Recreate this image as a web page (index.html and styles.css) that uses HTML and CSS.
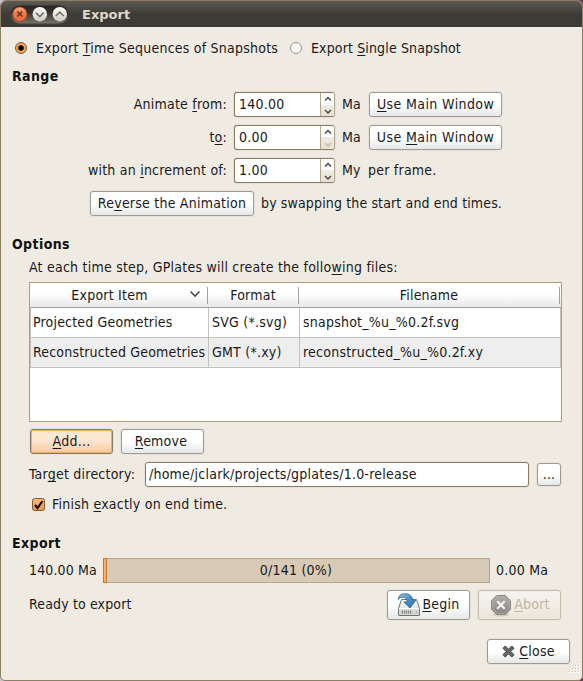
FILE: index.html
```html
<!DOCTYPE html>
<html lang="en">
<head>
<meta charset="utf-8">
<title>Export</title>
<link rel="stylesheet" href="styles.css">
</head>
<body>
<div class="window">
  <header class="titlebar">
    <div class="controls">
      <svg width="59" height="19" viewBox="0 0 59 19">
        <defs>
          <linearGradient id="red" x1="0" y1="0" x2="0" y2="1"><stop offset="0" stop-color="#f9a583"/><stop offset=".5" stop-color="#ef7546"/><stop offset="1" stop-color="#e9683a"/></linearGradient>
          <linearGradient id="gray" x1="0" y1="0" x2="0" y2="1"><stop offset="0" stop-color="#fffefa"/><stop offset="1" stop-color="#cfccc2"/></linearGradient>
          <linearGradient id="pill" x1="0" y1="0" x2="0" y2="1"><stop offset="0" stop-color="#282723"/><stop offset=".4" stop-color="#34332e"/><stop offset="1" stop-color="#77756b"/></linearGradient>
        </defs>
        <rect x=".5" y=".5" width="58" height="18" rx="9" fill="url(#pill)"/>
        <circle cx="9.8" cy="9.2" r="7.2" fill="url(#red)" stroke="#8c3920" stroke-width=".5"/>
        <circle cx="29.8" cy="9.2" r="7.2" fill="url(#gray)"/>
        <circle cx="49.8" cy="9.2" r="7.2" fill="url(#gray)"/>
        <path d="M7.300 6.500l5 5M12.300 6.500l-5 5" stroke="#65392a" stroke-width="1.700" fill="none"/>
        <path d="M25.800 7.700l4 3.800 4-3.800M45.800 11l4-3.800 4 3.800" stroke="#77756d" stroke-width="1.700" fill="none"/>
      </svg>
    </div>
    <h1>Export</h1>
  </header>

  <main class="content">
    <div class="modes">
      <span class="radio on"></span><span class="first">Export <u>T</u>ime Sequences of Snapshots</span>
      <span class="radio"></span><span class="tight">Export <u>S</u>ingle Snapshot</span>
    </div>

    <h2 class="range-title">Range</h2>
    <div class="range">
      <span class="label">Animate <u>f</u>rom:</span>
      <div class="spin"><span class="value">140.00</span><svg class="arrows" width="14" height="24"><path d="M4 7.500l3-3 3 3M4 17l3 3 3-3"/></svg></div>
      <span class="unit">Ma</span>
      <button class="button wide"><span><u>U</u>se Main Window</span></button>

      <span class="label">t<u>o</u>:</span>
      <div class="spin"><span class="value">0.00</span><svg class="arrows" width="14" height="24"><path d="M4 7.500l3-3 3 3"/><path class="off" d="M4 17l3 3 3-3"/></svg></div>
      <span class="unit">Ma</span>
      <button class="button wide"><span>Use <u>M</u>ain Window</span></button>

      <span class="label">with an <u>i</u>ncrement of:</span>
      <div class="spin"><span class="value">1.00</span><svg class="arrows" width="14" height="24"><path d="M4 7.500l3-3 3 3M4 17l3 3 3-3"/></svg></div>
      <span class="unit">My</span>
      <span class="unit frame">per frame.</span>
    </div>
    <div class="reverse">
      <button class="button"><span>Re<u>v</u>erse the Animation</span></button>
      <span class="unit tight">by swapping the start and end times.</span>
    </div>

    <h2 class="options-title">Options</h2>
    <p class="hint">At each time step, GPlates will create the follo<u>w</u>ing files:</p>
    <div class="table">
      <div class="thead">
        <span class="th sorted">Export Item<svg width="12" height="8"><path d="M1.500 1.500l4.500 4.500 4.500-4.500" fill="none" stroke="#4b4b4b" stroke-width="1.600"/></svg></span>
        <span class="th">Format</span>
        <span class="th">Filename</span>
      </div>
      <div class="tr"><span>Projected Geometries</span><span>SVG (*.svg)</span><span>snapshot_%u_%0.2f.svg</span></div>
      <div class="tr alt"><span>Reconstructed Geometries</span><span>GMT (*.xy)</span><span>reconstructed_%u_%0.2f.xy</span></div>
    </div>
    <div class="actions">
      <button class="button hot"><span><u>A</u>dd...</span></button>
      <button class="button remove"><span><u>R</u>emove</span></button>
    </div>
    <div class="target">
      <span class="target-label">Tar<u>g</u>et directory:</span>
      <div class="field">/home/jclark/projects/gplates/1.0-release</div>
      <button class="button browse"><span>...</span></button>
    </div>
    <div class="finish">
      <svg class="check" width="13" height="13" viewBox="0 0 13 13"><defs><linearGradient id="box" x1="0" y1="0" x2="0" y2="1"><stop offset="0" stop-color="#fbb972"/><stop offset="1" stop-color="#ee9440"/></linearGradient></defs><rect x=".5" y=".5" width="12" height="12" rx="2" fill="url(#box)" stroke="#825a38"/><path d="M3 7l2.500 3L10.500 3" fill="none" stroke="#000" stroke-width="2"/></svg>
      <span>Finish <u>e</u>xactly on end time.</span>
    </div>

    <h2 class="export-title">Export</h2>
    <div class="progress">
      <span class="from">140.00 Ma</span>
      <div class="bar"><span class="chunk"></span><span class="percent">0/141 (0%)</span></div>
      <span class="unit">0.00 Ma</span>
    </div>
    <div class="run">
      <span class="status">Ready to export</span>
      <button class="button tall">
        <svg width="24" height="24" viewBox="0 0 24 24">
          <defs>
            <linearGradient id="drive" x1="0" y1="0" x2="0" y2="1"><stop offset="0" stop-color="#fff"/><stop offset="1" stop-color="#cfd0cd"/></linearGradient>
            <linearGradient id="arrow" x1="0" y1="0" x2="1" y2="1"><stop offset="0" stop-color="#a9cbe3"/><stop offset=".5" stop-color="#4c8fc4"/><stop offset="1" stop-color="#3473aa"/></linearGradient>
          </defs>
          <path d="M4.500 6.500h15l3 9v6.500q0 .5-.5.500H2q-.5 0-.5-.5v-6.500z" fill="url(#drive)" stroke="#737571"/>
          <path d="M2 15.500h20" stroke="#fff"/>
          <path d="M4 17.500h12v3H4z" fill="#c3c4c1"/>
          <path d="M5.500 17.500v3M7.500 17.500v3M9.500 17.500v3M11.500 17.500v3M13.500 17.500v3M18.500 19h2" stroke="#888a85"/>
          <path d="M1.500 6.500C1.500 2.500 4 .8 7.500 .8c5 0 8 2.200 8 6.500h3.200L13 15 6.800 9h3.400C10.200 5.500 8.500 4.200 6 4.200 3.800 4.200 2.500 5 1.500 6.500z" fill="url(#arrow)" stroke="#245d8c" stroke-width=".8"/>
        </svg>
        <span><u>B</u>egin</span>
      </button>
      <button class="button tall disabled" disabled>
        <svg width="24" height="24" viewBox="0 0 24 24">
          <defs><linearGradient id="stop" x1="0" y1="0" x2="0" y2="1"><stop offset="0" stop-color="#b1b0ad"/><stop offset="1" stop-color="#858480"/></linearGradient></defs>
          <ellipse cx="12" cy="21.500" rx="8" ry="2" fill="#d0ccc2"/>
          <path d="M7.800 2.500h8.400l5.300 5.300v8.400l-5.300 5.300H7.800L2.500 16.200V7.800z" fill="url(#stop)" stroke="#85837e"/>
          <path d="M8.300 3.600h7.400l4.700 4.700v7.400l-4.700 4.700H8.300l-4.700-4.700V8.300z" fill="none" stroke="#b5b4b0" stroke-width=".8"/>
          <path d="M8.300 8.300l7.400 7.400M15.700 8.300l-7.400 7.400" stroke="#f5f4f0" stroke-width="2.200"/>
        </svg>
        <span><u>A</u>bort</span>
      </button>
    </div>
    <div class="footer">
      <button class="button close">
        <svg width="13" height="13" viewBox="0 0 14 14"><path d="M3.500 1L7 4.500 10.500 1 13 3.500 9.500 7l3.500 3.500-2.500 2.500L7 9.500 3.500 13 1 10.500 4.500 7 1 3.500z" fill="#666764" stroke="#40413f"/></svg>
        <span><u>C</u>lose</span>
      </button>
    </div>
  </main>
  <svg class="grip" width="12" height="12" viewBox="0 0 12 12"><path d="M9 1h2M6 4h2M9 4h2M3 7h2M6 7h2M9 7h2M0 10h2M3 10h2M6 10h2M9 10h2" stroke="#fff" stroke-width="2"/><path d="M9 .5h1M6 3.500h1M9 3.500h1M3 6.500h1M6 6.500h1M9 6.500h1M0 9.500h1M3 9.500h1M6 9.500h1M9 9.500h1" stroke="#c3baa9"/></svg>
</div>
</body>
</html>
```

FILE: styles.css
```css
* { box-sizing: border-box; }
html { background: #6d3656; }
body {
  margin: 0;
  background: linear-gradient(90deg, #c8c2c4 50%, #6d3656 50%);
  font: 14px/18px "DejaVu Sans Condensed", "DejaVu Sans", sans-serif;
  font-stretch: condensed;
  letter-spacing: .23px;
  color: #1a1a1a;
}
u { text-decoration: underline 1px; text-underline-offset: 2px; text-decoration-skip-ink: none; }
span { white-space: nowrap; }
.window {
  position: relative;
  width: 583px;
  height: 681px;
  border: 1px solid #8d7e66;
  border-radius: 6px 6px 5px 5px;
  background: #efebe3;
  overflow: hidden;
}
.titlebar {
  display: flex;
  align-items: center;
  height: 26px;
  padding-left: 9px;
  background: linear-gradient(#5c5a51, #3d3c37 50%, #3b3a35);
}
.controls { display: flex; height: 19px; }
h1 {
  margin: 1px 0 0 13px;
  font: bold 13px/18px "DejaVu Sans", sans-serif;
  letter-spacing: 0;
  color: #dfd8c8;
}
h2 { margin: 0; font-size: 14px; line-height: 18px; letter-spacing: .4px; color: #111; }
.content { padding: 0 11px; }
.modes { display: flex; align-items: center; height: 18px; margin: 12px 0 0 3px; }
.radio {
  width: 12px;
  height: 12px;
  margin-right: 9px;
  border: 1px solid #989184;
  border-radius: 50%;
  background: #fff;
}
.radio.on { border-color: #735b40; background: radial-gradient(circle, #000 0 2.300px, #f5a44f 3.200px); }
.first { width: 254px; }
.tight { letter-spacing: .14px; }
.range-title { margin-top: 10px; }
.range {
  display: grid;
  grid-template-columns: 215px 101px 20px 133px;
  grid-auto-rows: 25px;
  column-gap: 7px;
  row-gap: 8px;
  align-items: center;
  margin-top: 7px;
}
.label { text-align: right; padding-bottom: 1px; }
.unit { padding-bottom: 1px; }
.frame { margin-left: -1px; }
.button {
  display: flex;
  align-items: center;
  justify-content: center;
  height: 25px;
  padding: 0 0 1px;
  border: 1px solid #9b9b9b;
  border-radius: 3px;
  background: linear-gradient(#fff 50%, #e7e7e7);
  box-shadow: 0 0 0 1px #e7e2d8;
  font: inherit;
  letter-spacing: inherit;
  color: inherit;
}
.wide { letter-spacing: .4px; }
.spin {
  display: flex;
  height: 25px;
  border: 1px solid #8c7b60;
  border-right-color: #b3a68f;
  border-radius: 3px;
  background: #fff;
  box-shadow: 0 0 0 1px #e7e2d8;
}
.value { flex: 1; padding-left: 4px; line-height: 23px; }
.arrows {
  height: 23px;
  border-left: 1px solid #b3a68f;
  background: linear-gradient(#fff 0 50%, #f0ece4 50%, #e6e0d5);
  border-radius: 0 2px 2px 0;
}
.arrows path { fill: none; stroke: #50483c; stroke-width: 1.500; }
.arrows .off { stroke: #c9bda8; }
.reverse { display: flex; align-items: center; gap: 7px; margin: 8px 0 0 78px; }
.reverse .button { width: 164px; }
.options-title { margin-top: 19px; }
.hint { margin: 5px 0 0 17px; }
.table {
  width: 533px;
  height: 140px;
  margin: 6px 0 0 17px;
  border: 1px solid #b09d7d;
  background: #fff;
}
.thead, .tr { display: grid; grid-template-columns: 178px 91px 261px; }
.thead {
  height: 25px;
  border-bottom: 1px solid #a0a0a0;
  background: linear-gradient(#fff 45%, #e8e8e8);
}
.th {
  position: relative;
  height: 17px;
  margin-top: 4px;
  border-right: 1px solid #a0a0a0;
  text-align: center;
  line-height: 16px;
}
.th.sorted { padding-right: 18px; }
.th svg { position: absolute; right: 6px; top: 3px; }
.tr { height: 30px; border-left: 1px solid #c5c2bb; border-bottom: 1px solid #c5c2bb; }
.tr { grid-template-columns: 178px 91px 1fr; }
.tr span { padding-left: 3px; border-right: 1px solid #c5c2bb; line-height: 29px; }
.tr span:first-child { padding-left: 2px; letter-spacing: .18px; }
.alt { background: #eee; }
.actions { display: flex; gap: 8px; margin: 7px 0 0 18px; }
.actions .button, .tall, .close { width: 83px; }
.remove { padding-right: 3px; }
.hot {
  border-color: #85796a;
  background: linear-gradient(#fde7d1 45%, #f9c99b);
  box-shadow: inset 0 0 0 1px #f2ac62, 0 0 0 1px #e7e2d8;
}
.target { display: flex; align-items: center; margin: 8px 0 0 17px; }
.target-label { width: 116px; padding-bottom: 1px; }
.field {
  width: 384px;
  height: 25px;
  margin-right: 8px;
  padding-left: 3px;
  border: 1px solid #8c7b60;
  border-radius: 3px;
  background: #fff;
  box-shadow: 0 0 0 1px #e7e2d8;
  line-height: 23px;
}
.browse { width: 24px; height: 23px; }
.finish { display: flex; align-items: center; margin: 8px 0 0 19px; }
.check { margin: 1px 7px 0 1px; }
.export-title { margin-top: 21px; }
.progress { display: flex; align-items: center; margin: 6px 0 0 17px; }
.from { width: 74px; padding-bottom: 1px; letter-spacing: .12px; }
.bar {
  display: flex;
  width: 387px;
  height: 25px;
  margin-right: 6px;
  border: 1px solid #b9a684;
  background: #d7cbb7;
}
.chunk { width: 4px; margin: -1px 0 -1px -1px; border: 1px solid #c9762b; background: #f7b068; }
.percent { flex: 1; padding-right: 4px; text-align: center; line-height: 23px; }
.run { display: flex; align-items: center; gap: 8px; margin: 7px 0 0 17px; }
.status { width: 350px; padding-bottom: 2px; letter-spacing: .14px; }
.tall { height: 30px; gap: 1px; padding-bottom: 0; }
.tall span { padding-bottom: 2px; }
.disabled { border-color: #c7bda9; background: linear-gradient(#f7f4ef, #ebe6dc); color: #c1b49d; }
.footer { display: flex; justify-content: flex-end; margin: 19px 0 0; padding-right: 1px; }
.close { gap: 4px; }
.grip { position: absolute; right: 1px; bottom: 6px; }
```
